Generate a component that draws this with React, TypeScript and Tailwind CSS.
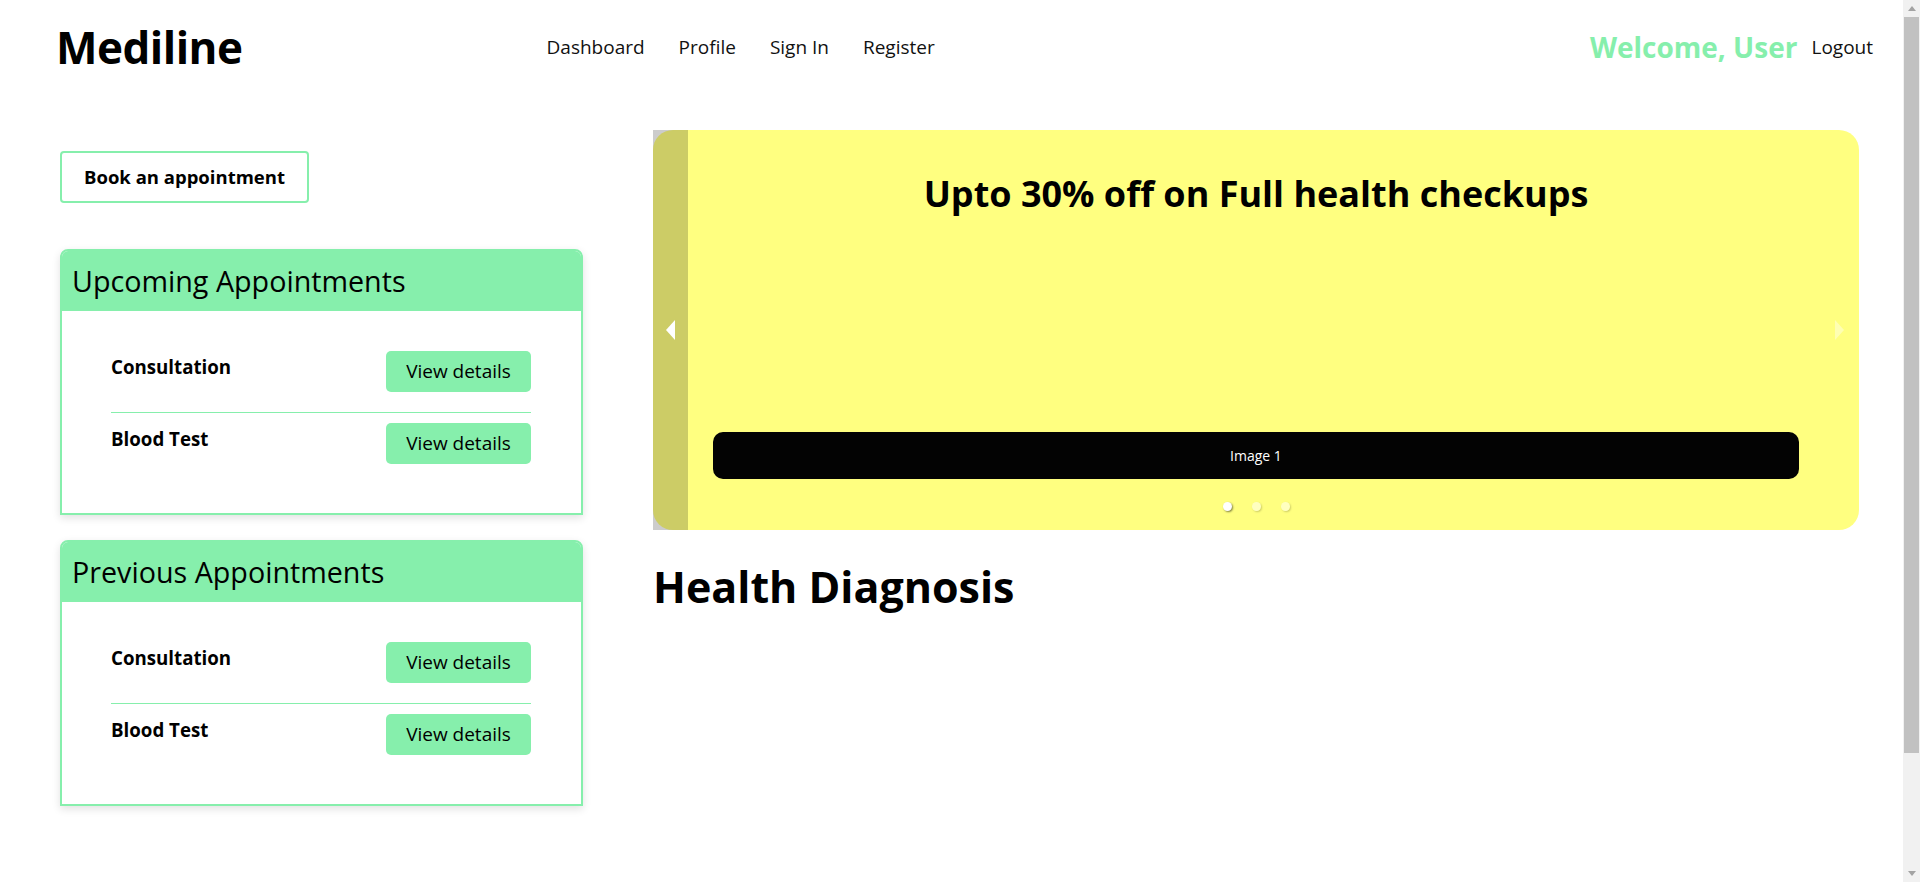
import React from "react";

const font = { fontFamily: '"Open Sans", "Noto Sans", sans-serif' };

function Row({ label, last }: { label: string; last?: boolean }) {
  return (
    <div
      className={
        "flex items-start justify-between " +
        (last ? "pt-[10px]" : "pb-[20px] border-b border-[#86efac]")
      }
    >
      <span className="mt-[2px] text-[18.7px] font-bold text-black">{label}</span>
      <button className="h-[41px] w-[145px] rounded-[5px] bg-[#86efac] text-[19px] text-black">
        View details
      </button>
    </div>
  );
}

function Card({ title }: { title: string }) {
  return (
    <div className="w-[523px] border-2 border-[#86efac] rounded-t-[8px] shadow-[0_3px_8px_rgba(0,0,0,0.12)] bg-white">
      <div className="h-[60px] bg-[#86efac] rounded-t-[6px] flex items-center px-[10px]">
        <span className="text-[28.7px] font-normal text-black">{title}</span>
      </div>
      <div className="pl-[49px] pr-[50px] pt-[40px] pb-[49px]">
        <Row label="Consultation" />
        <Row label="Blood Test" last />
      </div>
    </div>
  );
}

export default function App() {
  return (
    <div className="flex h-[882px] w-[1920px] overflow-hidden bg-white" style={font}>
      <div className="flex-1 flex flex-col">
        <header className="flex items-center h-[94px] pl-[56px] pr-[30px]">
          <span className="text-[44px] font-bold text-black tracking-[-0.5px]">Mediline</span>
          <nav className="ml-[304px] flex gap-[34px] text-[19px] text-[#111]">
            <span>Dashboard</span>
            <span>Profile</span>
            <span>Sign In</span>
            <span>Register</span>
          </nav>
          <div className="ml-auto flex items-center gap-[14px]">
            <span className="text-[28px] font-bold text-[#86efac]">Welcome, User</span>
            <span className="text-[19px] text-[#111]">Logout</span>
          </div>
        </header>
        <main className="flex pl-[60px] pt-[36px]">
          <div className="flex flex-col w-[523px]">
            <div className="mt-[21px]">
              <button className="h-[52px] w-[249px] rounded-[4px] border-2 border-[#86efac] bg-white text-[18.5px] font-bold text-black">
                Book an appointment
              </button>
            </div>
            <div className="mt-[46px] flex flex-col gap-[25px]">
              <Card title="Upcoming Appointments" />
              <Card title="Previous Appointments" />
            </div>
          </div>
          <div className="ml-[70px] w-[1206px] flex flex-col">
            <div className="relative h-[400px] rounded-[20px] bg-[#ffff80]">
              <div className="flex flex-col items-center h-full">
                <h2 className="mt-[37px] text-[36px] font-bold text-black">
                  Upto 30% off on Full health checkups
                </h2>
                <div className="mt-auto mb-[19px] w-[1086px] flex flex-col items-center">
                  <div className="h-[47px] w-full rounded-[10px] bg-[#030303] flex items-center justify-center text-[14px] text-white">
                    Image 1
                  </div>
                  <div className="mt-[23px] flex gap-[20px]">
                    <span className="h-[9px] w-[9px] rounded-full bg-white shadow-[1px_1px_2px_rgba(0,0,0,0.5)]" />
                    <span className="h-[9px] w-[9px] rounded-full bg-white/50 shadow-[1px_1px_2px_rgba(0,0,0,0.2)]" />
                    <span className="h-[9px] w-[9px] rounded-full bg-white/50 shadow-[1px_1px_2px_rgba(0,0,0,0.2)]" />
                  </div>
                </div>
              </div>
              <div className="absolute left-0 top-0 h-full w-[35px] bg-black/20 flex items-center justify-center">
                <svg width="10" height="20" viewBox="0 0 10 20">
                  <polygon points="9,0 9,20 0,10" fill="white" />
                </svg>
              </div>
              <div className="absolute right-[10px] top-0 h-full w-[20px] flex items-center justify-center">
                <svg width="10" height="20" viewBox="0 0 10 20">
                  <polygon points="1,0 1,20 10,10" fill="white" fillOpacity="0.4" />
                </svg>
              </div>
            </div>
            <h1 className="mt-[25px] text-[43px] font-bold text-black">Health Diagnosis</h1>
          </div>
        </main>
      </div>
      <div className="w-[17px] h-full bg-[#f1f1f1] flex flex-col items-center">
        <div className="h-[17px] flex items-center justify-center">
          <svg width="8" height="5" viewBox="0 0 8 5">
            <polygon points="0,5 8,5 4,0" fill="#a3a3a3" />
          </svg>
        </div>
        <div className="w-[15px] h-[736px] bg-[#c1c1c1]" />
        <div className="mt-auto h-[17px] flex items-center justify-center">
          <svg width="8" height="5" viewBox="0 0 8 5">
            <polygon points="0,0 8,0 4,5" fill="#a3a3a3" />
          </svg>
        </div>
      </div>
    </div>
  );
}
